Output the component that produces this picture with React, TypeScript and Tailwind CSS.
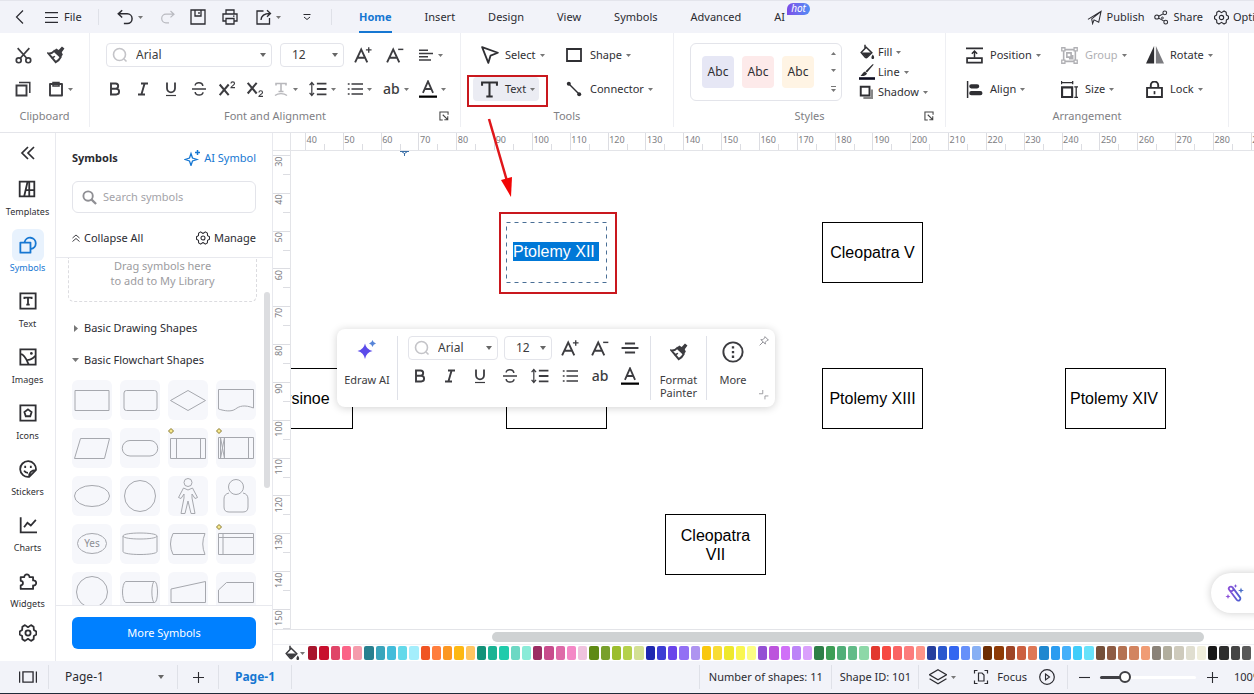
import type { ReactNode } from "react";

type IconProps = { children: ReactNode; className?: string };

// 16x16 line icon, inherits the text colour
function Icon({ children, className = "size-4" }: IconProps) {
  return (
    <svg
      viewBox="0 0 16 16"
      className={`shrink-0 ${className}`}
      fill="none"
      stroke="currentColor"
      strokeWidth="1.6"
      aria-hidden="true"
    >
      {children}
    </svg>
  );
}

function Caret({ className = "text-[#777]" }: { className?: string }) {
  return (
    <svg viewBox="0 0 5 3" className={`w-[5px] h-[3px] shrink-0 ${className}`}>
      <path d="M0 0h5L2.5 3z" fill="currentColor" />
    </svg>
  );
}

const Chevron = () => (
  <svg viewBox="0 0 6 4" className="w-[6px] h-1 shrink-0 text-[#666]">
    <path d="M0 0h6L3 4z" fill="currentColor" />
  </svg>
);

const Divider = ({ className = "h-5" }: { className?: string }) => (
  <div className={`w-px shrink-0 bg-[#dfe1e8] ${className}`} />
);

/* ---------- icons ---------- */

const BoldIcon = () => (
  <Icon>
    <path d="M4 2.5h4.6a2.6 2.6 0 0 1 0 5.2H4zM4 7.7h5.2a2.9 2.9 0 0 1 0 5.8H4z" strokeWidth="1.9" />
  </Icon>
);
const ItalicIcon = () => (
  <Icon>
    <path d="M6 2.5h7M3 13.5h7M9.6 2.5l-3.2 11" strokeWidth="1.9" />
  </Icon>
);
const UnderlineIcon = () => (
  <Icon>
    <path d="M4 1.5v5.8a4 4 0 0 0 8 0V1.5" strokeWidth="1.8" />
    <path d="M3 14.5h10" strokeWidth="1.2" />
  </Icon>
);
const StrikeIcon = () => (
  <Icon>
    <path d="M11.8 5c-.2-4.2-7.6-4.2-7.6-.6M4.2 11c.2 4.2 7.8 4 7.8.3M1 8h14" strokeWidth="1.5" />
  </Icon>
);
const SuperIcon = () => (
  <Icon className="size-[18px]">
    <path d="M1.5 4l8 9.5M9.5 4l-8 9.5" strokeWidth="1.8" />
    <path d="M11.5 3.2c0-2 3.2-2 3.2 0 0 1.3-3.2 2.6-3.2 3.6h3.6" strokeWidth="1" />
  </Icon>
);
const SubIcon = () => (
  <Icon className="size-[18px]">
    <path d="M1.5 2.5l8 9.5M9.5 2.5l-8 9.5" strokeWidth="1.8" />
    <path d="M11.5 11c0-2 3.2-2 3.2 0 0 1.3-3.2 2.6-3.2 3.6h3.6" strokeWidth="1" />
  </Icon>
);
const TextEffectIcon = () => (
  <Icon>
    <path d="M3 4.5v-2h10v2M8 2.5v8M5.5 10.5h5" />
    <path d="M2 14.5c3-2.5 9-2.5 12 0" strokeWidth="1.3" />
  </Icon>
);
const SpacingIcon = () => (
  <Icon className="size-[18px]">
    <path d="M2.5 2v12M.5 4.5l2-2.3 2 2.3M.5 11.5l2 2.3 2-2.3" strokeWidth="1.1" />
    <path d="M7 3.2h8.5M7 8h8.5M7 12.8h8.5" />
  </Icon>
);
const ListIcon = () => (
  <Icon>
    <path d="M4.5 3H16M4.5 8H16M4.5 13H16M.8 3h1.8M.8 8h1.8M.8 13h1.8" />
  </Icon>
);
const AlignLeftIcon = () => (
  <Icon>
    <path d="M1 3.2h9M1 6.5h14M1 9.8h9M1 13h12" />
  </Icon>
);
const AlignMiddleIcon = () => (
  <Icon className="size-[18px]">
    <path d="M3.5 4h9M.5 8h15M3.5 12h9" />
  </Icon>
);
const GrowIcon = () => (
  <Icon className="size-[18px]">
    <path d="M1 14.5L6.4 3l5.4 11.5M3 10.5h6.8" strokeWidth="1.7" />
    <path d="M10.6 3.5h5M13.1 1v5" strokeWidth="1.2" />
  </Icon>
);
const ShrinkIcon = () => (
  <Icon className="size-[18px]">
    <path d="M1 14.5L6.4 3l5.4 11.5M3 10.5h6.8" strokeWidth="1.7" />
    <path d="M10.8 3h4.6" strokeWidth="1.3" />
  </Icon>
);
const FontColorIcon = () => (
  <Icon className="size-[18px]">
    <path d="M3.5 11.5L8 1.2l4.5 10.3M5 8h6" />
    <path d="M0 14.8h16" stroke="#000" strokeWidth="2" />
  </Icon>
);
const CaseIcon = () => <span className="text-sm leading-4 font-medium">ab</span>;
const PainterIcon = ({ className = "size-[18px]" }: { className?: string }) => (
  <Icon className={className}>
    <path d="M1.2 6.6c2.2.2 4-.6 5.2-2.2l5.8 5.4c-.9 1.9-2.4 3.5-4.4 4.6z" strokeWidth="1.7" />
    <path d="M4 10.4c1.2 0 2.2-.4 3-1.2" strokeWidth="1.2" />
    <path d="M6.2 4.2l2-2 2.2 1.4L13.3.5l2.2 1.7-2.4 3.3 1 2.2-1.8 2z" fill="currentColor" stroke="none" />
  </Icon>
);
const GearIcon = ({ className = "size-4", strokeWidth = 1.6 }: { className?: string; strokeWidth?: number }) => (
  <Icon className={className}>
    <g strokeWidth={strokeWidth} strokeLinejoin="round">
      <path d="M8 2.8L10.7 1l2.3 1.4.2 2.9 2.2 1.3v2.8l-2.2 1.3-.2 2.9-2.3 1.4L8 13.2 5.3 15 3 13.6l-.2-2.9L.6 9.4V6.6l2.2-1.3.2-2.9L5.3 1z" />
      <circle cx="8" cy="8" r="2.3" />
    </g>
  </Icon>
);
const BucketIcon = () => (
  <Icon>
    <path d="M6 .8v4M2.2 8.5l5-5.2 5.6 5.4-4.6 4.6a1.5 1.5 0 0 1-2 0z" strokeWidth="1.5" />
    <path
      d="M2.5 8.5h10l-5.2 5.3zM13.8 10.5c2 2.6 1.6 4.5 0 4.5s-2-1.9 0-4.5z"
      fill="currentColor"
      stroke="none"
    />
  </Icon>
);
const LauncherIcon = () => (
  <Icon className="size-[10px]">
    <path d="M14.5 6V1.5h-13v13H6M6 6l7.5 7.5M14 8.5V14H8.5" strokeWidth="1.7" />
  </Icon>
);
const SearchRing = () => (
  <Icon className="size-4 text-[#c4c4c8]">
    <circle cx="7.5" cy="7.5" r="6" />
    <path d="M12 12l2.5 2.5" />
  </Icon>
);

/* ---------- small building blocks ---------- */

type ToolProps = {
  icon: ReactNode;
  name: string;
  caret?: boolean;
  className?: string;
};

function Tool({ icon, name, caret = false, className = "w-7 justify-center" }: ToolProps) {
  return (
    <button aria-label={name} className={`flex items-center h-6 shrink-0 ${className}`}>
      {icon}
      {caret && <Caret className="ml-1 text-[#777]" />}
    </button>
  );
}

function LabelTool({ icon, label, className = "" }: { icon: ReactNode; label: string; className?: string }) {
  return (
    <button className={`flex items-center h-6 whitespace-nowrap ${className}`}>
      <span className="w-6 flex shrink-0">{icon}</span>
      {label}
      <Caret className="ml-1 text-[#777]" />
    </button>
  );
}

type PickBoxProps = { value: string; label: string; search?: boolean; className: string };

function PickBox({ value, label, search = false, className }: PickBoxProps) {
  return (
    <label
      className={`flex items-center h-6 rounded border border-[#e3e4ea] bg-white px-[5px] text-xs shrink-0 ${className}`}
    >
      {search && <SearchRing />}
      <select
        aria-label={label}
        defaultValue={value}
        className={`appearance-none flex-1 min-w-0 bg-transparent outline-none ${search ? "pl-2" : "pl-[6px]"}`}
      >
        <option>{value}</option>
      </select>
      <Chevron />
    </label>
  );
}

type GroupProps = { title: string; launcher?: boolean; className: string; children: ReactNode };

function Group({ title, launcher = false, className, children }: GroupProps) {
  return (
    <section className={`flex flex-col pt-[5px] shrink-0 border-r border-[#eeeff3] ${className}`}>
      <div className="h-[68px]">{children}</div>
      <div className="grid grid-cols-[1fr_auto_1fr] items-center h-5 px-[11px] text-[#808084]">
        <h2 className="col-start-2">{title}</h2>
        {launcher && (
          <button aria-label={`${title} options`} className="justify-self-end text-[#444]">
            <LauncherIcon />
          </button>
        )}
      </div>
    </section>
  );
}

/* ---------- title bar ---------- */

const tabs = ["Home", "Insert", "Design", "View", "Symbols", "Advanced"];

function TitleBar() {
  return (
    <header className="flex items-center h-[33px] shrink-0 bg-[#f2f3f9] border-t border-[#e4e5ec] whitespace-nowrap text-[#2b2b31]">
      <Tool
        name="Back"
        className="w-10 justify-center"
        icon={
          <Icon>
            <path d="M11 1.5L4.5 8l6.5 6.5" strokeWidth="1.2" />
          </Icon>
        }
      />
      <button className="flex items-center gap-[6px] pl-[5px] w-[58px]">
        <Icon className="size-[13px]">
          <path d="M0 2h16M0 8h16M0 14h16" strokeWidth="1.4" />
        </Icon>
        File
      </button>
      <Divider className="h-4" />
      <Tool
        name="Undo"
        caret
        className="ml-[17px] w-[38px]"
        icon={
          <Icon className="size-[18px]">
            <path d="M5.5 2L2 5.2l3.5 3.2M2 5.2h8a4.3 4.3 0 0 1 0 8.6H7" strokeWidth="1.3" />
          </Icon>
        }
      />
      <Tool
        name="Redo"
        className="w-7 justify-center text-[#b9bac0]"
        icon={
          <Icon>
            <path d="M10.5 2L14 5.2l-3.5 3.2M14 5.2H6a4.3 4.3 0 0 0 0 8.6h3" strokeWidth="1.2" />
          </Icon>
        }
      />
      <Tool
        name="Save"
        className="w-8 justify-center"
        icon={
          <Icon>
            <path d="M1 1h14v14H1zM5 1v6h6V1M9 3v2" strokeWidth="1.3" />
          </Icon>
        }
      />
      <Tool
        name="Print"
        className="w-8 justify-center"
        icon={
          <Icon>
            <path d="M4 5V1h8v4M4 12H1V5h14v7h-3M4 9.5h8V15H4zM11 7.2h1.5" strokeWidth="1.3" />
          </Icon>
        }
      />
      <Tool
        name="Export"
        caret
        className="w-9 ml-[10px]"
        icon={
          <Icon>
            <path d="M7.5 2H1v13h12.5V9" strokeWidth="1.3" />
            <path d="M5 11c.3-4.2 3-6.5 9-6.5M11 1.3l3.5 3.2L11 7.8" strokeWidth="1.3" />
          </Icon>
        }
      />
      <Tool
        name="Customize"
        className="w-6 ml-[3px] justify-center"
        icon={
          <Icon className="size-2">
            <path d="M1 3h14M2 8l6 5 6-5" strokeWidth="2" />
          </Icon>
        }
      />
      <Divider className="h-4 ml-3" />

      <nav className="flex items-stretch gap-[33px] ml-[27px] h-full">
        {tabs.map((tab) => (
          <button
            key={tab}
            className={
              tab === "Home"
                ? "font-bold text-[#1677d2] border-b-2 border-[#1677d2] pt-[3px]"
                : "border-b-2 border-transparent pt-[3px]"
            }
          >
            {tab}
          </button>
        ))}
        <button className="relative border-b-2 border-transparent pt-[3px]">
          AI
          <span className="absolute left-[13px] top-[2px] h-3 px-1 rounded-full rounded-bl-none bg-linear-to-r from-[#7b4be8] to-[#4d8df5] text-white text-[10px] leading-[11px] italic">
            hot
          </span>
        </button>
      </nav>

      <div className="flex-1" />
      <button className="flex items-center gap-1">
        <Icon className="size-[15px]">
          <path d="M1 10L15 1.5 12.5 13l-5-2.5L6 14.5l-1-5L14.5 2" strokeWidth="1.1" />
        </Icon>
        Publish
      </button>
      <button className="flex items-center gap-1 ml-[10px]">
        <Icon className="size-[15px]">
          <circle cx="3" cy="7.5" r="2.2" strokeWidth="1.1" />
          <circle cx="11.5" cy="3" r="2" strokeWidth="1.1" />
          <circle cx="12.5" cy="13" r="2" strokeWidth="1.1" />
          <circle cx="9" cy="8.5" r="1" strokeWidth="1" />
          <path d="M5 6.6l4.7-2.5M5 8.7l5.7 3.2" strokeWidth="1.1" />
        </Icon>
        Share
      </button>
      <button className="flex items-center gap-1 ml-[11px] w-10 overflow-hidden">
        <GearIcon className="size-[15px]" strokeWidth={1.2} />
        Options
      </button>
    </header>
  );
}

/* ---------- ribbon ---------- */

const styleChips = ["bg-[#e6e7f5]", "bg-[#fdeaea]", "bg-[#fff4e4]"];

function Ribbon() {
  return (
    <div className="flex h-[100px] pb-[5px] shrink-0 bg-white border-b border-[#e4e5ea] overflow-hidden text-[#2f2f33]">
      <Group title="Clipboard" className="w-[90px]">
        <div className="grid grid-cols-2 h-full items-center pl-[15px] pr-[11px] text-[#3c3c40]">
          <Tool
            name="Cut"
            className="w-6"
            icon={
              <Icon className="size-[17px]">
                <path d="M2.5 1l8.8 9.8M13.5 1l-8.8 9.8" />
                <circle cx="3.5" cy="12.5" r="2.3" />
                <circle cx="12.5" cy="12.5" r="2.3" />
              </Icon>
            }
          />
          <Tool name="Format painter" className="w-6" icon={<PainterIcon />} />
          <Tool
            name="Copy"
            className="w-6"
            icon={
              <Icon>
                <path d="M1.5 4.5h10v10h-10z" strokeWidth="1.9" />
                <path d="M4 1.5h10.8V12" strokeWidth="1.5" />
              </Icon>
            }
          />
          <Tool
            name="Paste"
            caret
            icon={
              <Icon>
                <path d="M2 3h12v11.5H2z" strokeWidth="1.9" strokeLinejoin="round" />
                <path d="M5 1.5h6V5H5z" strokeWidth="1.5" />
              </Icon>
            }
          />
        </div>
      </Group>

      <Group title="Font and Alignment" launcher className="w-[371px]">
        <div className="flex items-center h-[34px] pl-4 text-[#3c3c40]">
          <PickBox label="Font" value="Arial" search className="w-[166px]" />
          <PickBox label="Font size" value="12" className="w-16 ml-2" />
          <Tool name="Increase font size" icon={<GrowIcon />} className="w-7 ml-[5px] justify-center" />
          <Tool name="Decrease font size" icon={<ShrinkIcon />} className="w-7 ml-1 justify-center" />
          <Tool name="Text align" icon={<AlignLeftIcon />} caret className="w-9 ml-[9px]" />
        </div>
        <div className="flex items-center h-[34px] pl-[11px] text-[#3c3c40]">
          <Tool name="Bold" icon={<BoldIcon />} />
          <Tool name="Italic" icon={<ItalicIcon />} />
          <Tool name="Underline" icon={<UnderlineIcon />} />
          <Tool name="Strikethrough" icon={<StrikeIcon />} />
          <Tool name="Superscript" icon={<SuperIcon />} />
          <Tool name="Subscript" icon={<SubIcon />} />
          <Tool name="Text effect" icon={<TextEffectIcon />} caret className="w-9 ml-1 text-[#b8b8bc]" />
          <Tool name="Line spacing" icon={<SpacingIcon />} caret className="w-[38px]" />
          <Tool name="List" icon={<ListIcon />} caret className="w-9" />
          <Tool name="Text case" icon={<CaseIcon />} caret className="w-9" />
          <Tool name="Font color" icon={<FontColorIcon />} caret className="w-9" />
        </div>
      </Group>

      <Group title="Tools" className="w-[213px]">
        <div className="grid grid-cols-[93px_1fr] h-full items-center justify-items-start pl-3">
          <LabelTool
            label="Select"
            className="pl-2"
            icon={
              <Icon className="size-[18px]">
                <path d="M1 1l14 5-6.5 2.5-2 6.5z" strokeLinejoin="round" />
              </Icon>
            }
          />
          <LabelTool
            label="Shape"
            icon={
              <Icon>
                <path d="M1 2h14v12H1z" strokeWidth="1.8" />
              </Icon>
            }
          />
          <LabelTool
            label="Text"
            className="pl-2 pr-1 rounded bg-[#ebecf3]"
            icon={
              <Icon className="size-[17px]">
                <path d="M1 4.5v-3h14v3M8 1.5v13M5 14.5h6" strokeWidth="1.9" />
              </Icon>
            }
          />
          <LabelTool
            label="Connector"
            icon={
              <Icon>
                <path d="M3 3l10 10" strokeWidth="1.4" />
                <circle cx="2.8" cy="2.8" r="2" fill="currentColor" stroke="none" />
                <circle cx="13.2" cy="13.2" r="2" fill="currentColor" stroke="none" />
              </Icon>
            }
          />
        </div>
      </Group>

      <Group title="Styles" launcher className="w-[272px]">
        <div className="flex items-center h-full pl-4">
          <div className="flex items-center gap-2 w-[152px] h-[58px] pl-[11px] pr-[5px] rounded-md border border-[#e3e4ea]">
            {styleChips.map((chip) => (
              <button key={chip} className={`size-8 shrink-0 rounded text-xs ${chip}`}>
                Abc
              </button>
            ))}
            <div className="flex flex-col items-center justify-between h-10 ml-auto">
              <button aria-label="Previous styles" className="flex rotate-180">
                <Caret />
              </button>
              <button aria-label="Next styles" className="flex">
                <Caret />
              </button>
              <button aria-label="All styles" className="flex flex-col items-center border-t border-[#777] pt-[2px]">
                <Caret />
              </button>
            </div>
          </div>
          <div className="flex flex-col ml-[17px]">
            {[
              { label: "Fill", icon: <BucketIcon /> },
              {
                label: "Line",
                icon: (
                  <Icon>
                    <path
                      d="M14.8.5L8 8.5 6.5 7.2l7-7zM6 7.5l2 2c-1 2.5-4 2.8-6.5 2.5C3 10.5 4 8 6 7.5z"
                      fill="currentColor"
                      stroke="none"
                    />
                    <path d="M0 14.5h16" stroke="#0d0d20" strokeWidth="2.6" />
                  </Icon>
                ),
              },
              {
                label: "Shadow",
                icon: (
                  <Icon className="size-[14px]">
                    <path d="M5 15h10V5" stroke="#888" strokeWidth="3" />
                    <path d="M2 2h10v10H2z" strokeWidth="2.2" />
                  </Icon>
                ),
              },
            ].map((item) => (
              <button key={item.label} className="flex items-center h-5">
                <span className="w-[19px] flex">{item.icon}</span>
                {item.label}
                <Caret className="ml-1 text-[#777]" />
              </button>
            ))}
          </div>
        </div>
      </Group>

      <Group title="Arrangement" className="w-[283px]">
        <div className="grid grid-cols-[95px_85px_1fr] h-full items-center justify-items-start pl-5">
          <LabelTool
            label="Position"
            icon={
              <Icon className="size-[17px]">
                <path d="M0 1.2h16M1 10.5h14v4.2H1z" />
                <path d="M8 10V4M5.5 6.3L8 3.8l2.5 2.5" strokeWidth="1.4" />
              </Icon>
            }
          />
          <LabelTool
            label="Group"
            className="text-[#b0b0b4]"
            icon={
              <Icon className="size-[17px]">
                <path d="M2.5 2.5h11v11h-11z" strokeWidth="1.5" />
                <path
                  d="M.7.7h3v3h-3zM12.3.7h3v3h-3zM.7 12.3h3v3h-3zM12.3 12.3h3v3h-3z"
                  strokeWidth="1.2"
                  fill="#fff"
                />
                <path d="M5.5 5.5h4v4h-4zM11 7.5V11H7.5" strokeWidth="1.5" />
              </Icon>
            }
          />
          <LabelTool
            label="Rotate"
            icon={
              <Icon className="size-[18px]">
                <path d="M7.2 0v15.5H0z" fill="currentColor" stroke="none" />
                <path d="M8.8 0v15.5H16z" fill="#7c7c80" stroke="none" />
              </Icon>
            }
          />
          <LabelTool
            label="Align"
            icon={
              <Icon className="size-[17px]">
                <path d="M1.5 0v16" strokeWidth="1.4" />
                <path d="M5 5h5.500M5 11.500h8.500" strokeWidth="4" strokeLinecap="round" />
              </Icon>
            }
          />
          <LabelTool
            label="Size"
            icon={
              <Icon className="size-[17px]">
                <path d="M1 6h9.5v9H1z" strokeWidth="2" />
                <path d="M.5 0v3M11 0v3M0 1.5h11.5M12.5 5.5H16M12.5 15.5H16M14.3 5.5v10" strokeWidth="1.2" />
              </Icon>
            }
          />
          <LabelTool
            label="Lock"
            icon={
              <Icon className="size-[17px]">
                <path d="M1 6.5h14V15H1zM4.5 6.5V4a3.5 3.5 0 0 1 7 0v2.5" strokeWidth="1.8" />
                <path d="M8 9.5v3" />
              </Icon>
            }
          />
        </div>
      </Group>
    </div>
  );
}

/* ---------- left rail ---------- */

const railItems = [
  {
    label: "Templates",
    icon: <path d="M1.5 1.5h13v13h-13zM8.5 1.5l-3 13M10 1.5v13M6.5 9h8" />,
  },
  {
    label: "Symbols",
    icon: (
      <>
        <path d="M1.2 5.8h9v9h-9z" strokeLinejoin="round" />
        <path d="M5 5.5a5 5 0 1 1 5.5 6" />
      </>
    ),
  },
  {
    label: "Text",
    icon: (
      <>
        <path d="M1.2 1.2h13.6v13.6H1.2z" />
        <path d="M4.8 6.3V5h6.4v1.3M8 5v6M6.5 11.2h3" />
      </>
    ),
  },
  {
    label: "Images",
    icon: (
      <>
        <path d="M1.2 1.2h13.6v13.6H1.2z" />
        <path d="M1.5 5.5C5 5.5 7 11 8.5 14.5M7.5 10.5c2 .5 4-.5 7-3.5" />
        <circle cx="11" cy="4.8" r="1.2" fill="currentColor" stroke="none" />
      </>
    ),
  },
  {
    label: "Icons",
    icon: (
      <>
        <path d="M1.2 1.2h13.6v13.6H1.2z" />
        <path d="M8 4.8l3.2 2.4-1.2 3.7H6L4.8 7.2z" />
      </>
    ),
  },
  {
    label: "Stickers",
    icon: (
      <>
        <path d="M9 15A7 7 0 1 1 15 9zM9 15c0-3.5 2-6 6-6" />
        <path d="M5.5 5v2M10.5 5v2M4.5 9.5c.8 1.5 2 2 3.5 2" />
      </>
    ),
  },
  {
    label: "Charts",
    icon: <path d="M1.5 1v13.5H16M4.5 10l3-4 3 2.5L15 3.5" />,
  },
  {
    label: "Widgets",
    icon: (
      <path
        d="M1.5 4.5h3.2a2.3 2.3 0 1 1 4.6 0h3.2v3a2.3 2.3 0 1 1 0 4.5v3h-11v-3.2a2 2 0 1 0 0-4z"
        strokeLinejoin="round"
      />
    ),
  },
];

function Rail() {
  return (
    <aside className="flex flex-col items-center w-14 shrink-0 bg-white border-r border-[#e8e9ee] text-[#2f2f33]">
      <button aria-label="Collapse panel" className="flex items-center h-10">
        <Icon>
          <path d="M8 2L2 8l6 6M14 2L8 8l6 6" strokeWidth="1.7" />
        </Icon>
      </button>
      {railItems.map((item) => (
        <button
          key={item.label}
          className={`flex flex-col items-center h-14 shrink-0 ${item.label === "Symbols" ? "text-[#1677d2]" : ""}`}
        >
          <span
            className={`flex items-center justify-center size-8 rounded-md ${
              item.label === "Symbols" ? "bg-[#e8f2fd]" : ""
            }`}
          >
            <Icon className="size-[18px]">{item.icon}</Icon>
          </span>
          <span className="text-[9px] leading-[14px]">{item.label}</span>
        </button>
      ))}
      <button aria-label="Settings" className="flex items-center h-6">
        <GearIcon className="size-[18px]" />
      </button>
    </aside>
  );
}

/* ---------- symbols panel ---------- */

const flowShapes = [
  { name: "Process", d: "M3 10.5h34v20H3z" },
  {
    name: "Alternate process",
    d: "M6.5 10.5h28q2.5 0 2.5 2.5v15q0 2.5-2.5 2.5h-28Q4 30.5 4 28V13q0-2.5 2.5-2.5z",
  },
  { name: "Decision", d: "M2.5 20.5l17.5-10 17.5 10-17.5 10z" },
  { name: "Document", d: "M2.5 9.5h35V28c-9-3.5-14-2-18 1s-11 2-17 0z" },
  { name: "Data", d: "M8.5 10.5h29l-5 20h-30z" },
  { name: "Terminator", d: "M10 12.5h20A7.5 7.5 0 0 1 30 28H10a7.5 7.5 0 0 1 0-15.5z" },
  { name: "Predefined process", d: "M2.5 10.5h35v20h-35zM8.5 10.5v20M32.5 10.5v20", handle: true },
  {
    name: "Striped process",
    d: "M2.5 9.5h35v21h-35zM4.5 9.5v21M8.5 9.5v21M32.5 9.5v21M4.5 9.5l4 21M8.5 9.5l-4 21",
    handle: true,
  },
  { name: "Ellipse", d: "M2.5 20a17.5 10.5 0 1 0 35 0 17.5 10.5 0 1 0-35 0" },
  { name: "Circle", d: "M4.5 20a15.5 15.5 0 1 0 31 0 15.5 15.5 0 1 0-31 0" },
  {
    name: "Person",
    d: "M16 6.5a4 4 0 1 0 8 0 4 4 0 1 0-8 0M15.5 12l4.5 2 4.5-2 5 9.5-2.5 1-3-4.5v4l3 15.5h-4L20 25l-3 12.5h-4L16 22v-4l-3 4.5-2.5-1z",
  },
  {
    name: "User",
    d: "M12.5 11a7.5 7.5 0 1 0 15 0 7.5 7.5 0 1 0-15 0M13 17q-5 1-5 6v8q0 5 5 5h14q5 0 5-5v-8q0-5-5-6",
  },
  { name: "Yes", d: "M5.5 19.5a14.5 10 0 1 0 29 0 14.5 10 0 1 0-29 0", text: "Yes" },
  { name: "Database", d: "M3 12v15.5c0 4 34 4 34 0V12c0-4-34-4-34 0s34 4 34 0" },
  { name: "Stored data", d: "M5 9.5h32q-4.500 10.500 0 21H5q-5-10.500 0-21z" },
  { name: "Internal storage", d: "M2.5 9.5h35v21h-35zM7 9.5v21M2.5 13.5h35", handle: true },
  { name: "Reference", d: "M4.5 20a15.5 15.5 0 1 0 31 0 15.5 15.5 0 1 0-31 0" },
  { name: "Direct access", d: "M5.5 9.5h29c4 0 4 21 0 21h-29c-4-3-4-18 0-21zM34.5 9.5c-3.5 0-3.5 21 0 21" },
  { name: "Manual input", d: "M3 17l34.5-7.5v21H3z" },
  { name: "Card", d: "M2.5 18l8-7.5h27v20h-35z" },
];

function SymbolsPanel() {
  return (
    <aside className="flex flex-col w-[217px] shrink-0 bg-white border-r border-[#e8e9ee] text-[#2b2b31]">
      <div className="px-4 pt-3 border-b border-[#e8e9ee] h-[125px] shrink-0">
        <div className="flex items-center justify-between h-[26px]">
          <h2 className="font-bold">Symbols</h2>
          <button className="flex items-center gap-1 text-[#1677d2]">
            <Icon>
              <path d="M7 3.5L8.5 8 13 9.5 8.5 11 7 15.5 5.5 11 1 9.5 5.5 8z" strokeWidth="1.3" />
              <path d="M13.5 0v5M11 2.5h5" strokeWidth="1.5" />
            </Icon>
            AI Symbol
          </button>
        </div>
        <label className="flex items-center gap-[6px] h-8 mt-[10px] px-[9px] rounded-md border border-[#e3e4ea]">
          <Icon className="size-[15px] text-[#8f8f94]">
            <circle cx="6.5" cy="6.5" r="5" strokeWidth="2" />
            <path d="M10 10l5 5" strokeWidth="2.4" />
          </Icon>
          <input
            aria-label="Search symbols"
            placeholder="Search symbols"
            className="w-full min-w-0 outline-none placeholder:text-[#a3a3a8]"
          />
        </label>
        <div className="flex items-center justify-between h-8 mt-[9px]">
          <button className="flex items-center gap-1">
            <Icon className="size-2">
              <path d="M1 8l7-6 7 6M1 15l7-6 7 6" strokeWidth="1.8" />
            </Icon>
            Collapse All
          </button>
          <button className="flex items-center gap-1">
            <GearIcon className="size-[14px]" strokeWidth={1.2} />
            Manage
          </button>
        </div>
      </div>

      <div className="relative flex-1 min-h-0 overflow-hidden">
        <div className="ml-3 mr-[15px] h-11 rounded-b-md border border-t-0 border-dashed border-[#dcdce0] text-center leading-[15px] text-[#9c9ca0]">
          Drag symbols here
          <br />
          to add to My Library
        </div>
        <div className="px-4 pt-[10px]">
          <button className="flex items-center gap-[5px] h-8">
            <svg viewBox="0 0 4 7" className="w-1 h-[7px] ml-[2px] mr-px">
              <path d="M0 0l4 3.5L0 7z" fill="#777" />
            </svg>
            Basic Drawing Shapes
          </button>
          <button className="flex items-center gap-[5px] h-8">
            <svg viewBox="0 0 7 4" className="w-[7px] h-1">
              <path d="M0 0h7L3.5 4z" fill="#777" />
            </svg>
            Basic Flowchart Shapes
          </button>
          <div className="grid grid-cols-4 gap-2 mt-1">
            {flowShapes.map((shape) => (
              <button key={shape.name} aria-label={shape.name} className="h-10 rounded-md bg-[#f6f7fb]">
                <svg viewBox="0 0 40 40" className="size-10 overflow-visible" fill="none" stroke="#a6a8ae">
                  <path d={shape.d} />
                  {shape.text && (
                    <text x="20" y="23" textAnchor="middle" fontSize="10" fill="#8c8e94" stroke="none">
                      {shape.text}
                    </text>
                  )}
                  {shape.handle && <path d="M3 .5L5.5 3 3 5.5.5 3z" fill="#f7e98c" stroke="#8a7a30" />}
                </svg>
              </button>
            ))}
          </div>
        </div>
        <div className="absolute right-[2px] top-[34px] w-[6px] h-[196px] rounded-full bg-[#dcdde0]" />
      </div>

      <div className="h-14 shrink-0 border-t border-[#e8e9ee] px-4 pt-[11px]">
        <button className="w-full h-8 rounded-md bg-[#0080ff] text-white">More Symbols</button>
      </div>
    </aside>
  );
}

/* ---------- rulers ---------- */

// pixels between two labelled marks
const STEP = 37.83;

function TopRuler() {
  const marks = Array.from({ length: 26 }, (_, i) => 40 + i * 10);
  return (
    <svg className="w-full h-[18px] block border-b border-[#e3e4e8]" shapeRendering="crispEdges">
      {marks.map((mark, i) => {
        const x = 14.5 + i * STEP;
        return (
          <g key={mark} stroke="#dcdde2">
            <line x1={x} x2={x} y1="0" y2="18" />
            <line x1={x + STEP / 2} x2={x + STEP / 2} y1="11" y2="18" />
            <text x={x + 1} y="10" fontSize="9" fill="#7d7d82" stroke="none">
              {mark}
            </text>
          </g>
        );
      })}
    </svg>
  );
}

function SideRuler() {
  const marks = Array.from({ length: 13 }, (_, i) => 30 + i * 10);
  return (
    <svg className="w-[18px] h-full block shrink-0 border-r border-[#e3e4e8]" shapeRendering="crispEdges">
      {marks.map((mark, i) => {
        const y = 4.5 + i * STEP;
        return (
          <g key={mark} stroke="#dcdde2">
            <line x1="0" x2="18" y1={y} y2={y} />
            <line x1="10" x2="18" y1={y + STEP / 2} y2={y + STEP / 2} />
            <text
              transform={`translate(9 ${y + 1}) rotate(-90)`}
              textAnchor="end"
              fontSize="9"
              fill="#7d7d82"
              stroke="none"
            >
              {mark}
            </text>
          </g>
        );
      })}
    </svg>
  );
}

/* ---------- canvas ---------- */

const nodes = [
  { text: "Cleopatra V", place: "left-[531px] top-[71px] px-1" },
  { text: "Arsinoe", place: "left-[-39px] top-[217px] px-1" },
  { text: "", place: "left-[215px] top-[217px] px-1" },
  { text: "Ptolemy XIII", place: "left-[531px] top-[217px] px-1" },
  { text: "Ptolemy XIV", place: "left-[774px] top-[217px] pl-px pr-1" },
  { text: "Cleopatra VII", place: "left-[374px] top-[363px] px-1" },
];

const floatingTools = [
  { name: "Bold text", icon: <BoldIcon /> },
  { name: "Italic text", icon: <ItalicIcon /> },
  { name: "Underline text", icon: <UnderlineIcon /> },
  { name: "Strike text", icon: <StrikeIcon /> },
  { name: "Text line spacing", icon: <SpacingIcon /> },
  { name: "Text list", icon: <ListIcon /> },
  { name: "Change case", icon: <CaseIcon /> },
  { name: "Text color", icon: <FontColorIcon /> },
];

function FloatingToolbar() {
  return (
    <div className="absolute left-[46px] top-[178px] flex h-[78px] py-[7px] bg-white rounded-lg shadow-[0_1px_8px_rgba(0,0,0,0.18)] text-[#3c3c40]">
      <button className="flex flex-col items-center w-[60px] pt-1">
        <svg viewBox="0 0 20 20" className="size-5">
          <path d="M8 3.5q1.2 6 7.5 7.5Q9.2 12.500 8 19q-1.200-6.500-7.500-8Q6.800 9.500 8 3.500z" fill="#5b4bea" />
          <path d="M15.5 0q.6 2.8 3.5 3.5-2.9.7-3.5 3.5-.6-2.8-3.5-3.5Q14.9 2.8 15.5 0z" fill="#5684d8" />
        </svg>
        <span className="mt-3 leading-4">Edraw AI</span>
      </button>
      <Divider className="h-full" />
      <div className="w-[252px]">
        <div className="flex items-center h-6 pl-[10px]">
          <PickBox label="Selection font" value="Arial" search className="w-[90px]" />
          <PickBox label="Selection font size" value="12" className="w-12 ml-[6px]" />
          <Tool name="Grow text" icon={<GrowIcon />} className="w-[30px] ml-[3px] justify-center" />
          <Tool name="Shrink text" icon={<ShrinkIcon />} className="w-[30px] justify-center" />
          <Tool name="Align center" icon={<AlignMiddleIcon />} className="w-[30px] justify-center" />
        </div>
        <div className="flex items-center h-8 pl-[7px]">
          {floatingTools.map((tool) => (
            <Tool key={tool.name} name={tool.name} icon={tool.icon} className="w-[30px] justify-center" />
          ))}
        </div>
      </div>
      <Divider className="h-full" />
      <button className="flex flex-col items-center w-[55px] pt-[7px] leading-[13px]">
        <PainterIcon />
        <span className="mt-3">
          Format
          <br />
          Painter
        </span>
      </button>
      <Divider className="h-full" />
      <button className="flex flex-col items-center w-[52px] pt-[5px] leading-[13px]">
        <Icon className="size-[22px]">
          <circle cx="8" cy="8" r="7" strokeWidth="1.4" />
          <path d="M8 3.8v1.7M8 7.2v1.7M8 10.6v1.7" strokeWidth="1.7" />
        </Icon>
        <span className="mt-[10px]">More</span>
      </button>
      <div className="flex flex-col justify-between w-4 text-[#8a8a90]">
        <button aria-label="Pin toolbar">
          <Icon className="size-[10px]">
            <path d="M9.5 1L15 6.5l-2 .5-3 3 .2 3L3 5.8 6 6l3-3zM6.5 9.5L1 15" strokeWidth="1.5" />
          </Icon>
        </button>
        <button aria-label="Resize toolbar">
          <Icon className="size-[10px]">
            <path d="M0 6h6V0M15 9.5H9.5V15" strokeWidth="1.3" />
          </Icon>
        </button>
      </div>
    </div>
  );
}

function Canvas() {
  return (
    <div className="relative flex-1 min-w-0 overflow-hidden bg-white font-['Liberation_Sans',Arial,sans-serif] text-black">
      {nodes.map((node) => (
        <div
          key={node.place}
          className={`absolute flex items-center justify-center text-center w-[101px] h-[61px] border border-black text-base leading-[19px] ${node.place}`}
        >
          {node.text}
        </div>
      ))}

      {/* text box being edited */}
      <svg className="absolute left-[215px] top-[71px] w-[101px] h-[61px]" fill="none">
        <rect x="0.5" y="0.5" width="100" height="60" stroke="#4a6f96" strokeDasharray="4 4" />
      </svg>
      <div className="absolute left-[222px] top-[91px] w-[86px] h-[19px] bg-[#0078d7] text-white text-base leading-[19px]">
        Ptolemy XII
      </div>

      {/* cursor mark on the ruler */}
      <svg viewBox="0 0 9 5" className="absolute left-[109px] top-0 w-[9px] h-[5px]" stroke="#3a6ea5">
        <path d="M0 .5h9M1.5.5l3 2 3-2M4.5 2v3" fill="none" />
      </svg>

      <div className="font-['Noto_Sans',sans-serif]">
        <FloatingToolbar />
      </div>

      <button
        aria-label="AI assistant"
        className="absolute -right-5 bottom-4 flex items-center w-[63px] h-10 pl-[14px] rounded-full bg-white shadow-[0_0_8px_rgba(0,0,0,0.2)]"
      >
        <svg viewBox="0 0 20 20" className="size-5" fill="none">
          <defs>
            <linearGradient id="wand" x1="0" y1="0" x2="1" y2="0">
              <stop offset="0" stopColor="#8a4fd8" />
              <stop offset="1" stopColor="#4a5fd0" />
            </linearGradient>
          </defs>
          <path
            d="M4.2 6.8a2 2 0 0 1 3.3-2.4l7.5 10a2 2 0 0 1-3.3 2.4zM5.8 8.8l3.3-2.4"
            stroke="url(#wand)"
            strokeWidth="1.8"
          />
          <path d="M10.5 1l.6 1.4 1.4.6-1.4.6-.6 1.4-.6-1.4L8.5 3l1.400-.6z" fill="#7a55d8" />
          <path d="M16 4.5l.8 2.2 2.2.8-2.2.8-.8 2.2-.8-2.2-2.2-.8 2.2-.8z" fill="#4a6fc8" />
          <path d="M3 11l.7 1.8 1.8.7-1.8.7L3 16l-.7-1.8-1.8-.7 1.8-.7z" fill="#8a4fd8" />
        </svg>
      </button>
    </div>
  );
}

const palette = [
  "#a8152d", "#c8102e", "#e04468", "#fb6488", "#f59cac",
  "#28808f", "#3aa5bc", "#42bcda", "#64d9ea", "#a4eefc",
  "#f05423", "#ff7e3e", "#fc9722", "#fdb813", "#ffc562",
  "#129278", "#1ab394", "#20cbab", "#6dd8c4", "#8aebd8",
  "#9b2c62", "#c84b8c", "#de6aa8", "#f488c6", "#efc3de",
  "#5e8a14", "#78a02c", "#9cbd2e", "#b5d14c", "#d3e094",
  "#1e27b0", "#3c3cd4", "#6a44ea", "#9270f4", "#ae94f0",
  "#f9c80e", "#f8dc36", "#eee82c", "#f9f650", "#fcfd84",
  "#9450d4", "#bc54dc", "#d070f8", "#bc84f8", "#daa0fc",
  "#2e7f48", "#3d9e56", "#50ae78", "#62bb88", "#8dd8a8",
  "#e2382e", "#f64a42", "#fa6464", "#fc7c7c", "#fd9488",
  "#263f9e", "#2a58ce", "#3366f0", "#6690fa", "#88b0f4",
  "#6e2e04", "#8e3a06", "#9e4426", "#cc6040", "#de7856",
  "#1e88d0", "#2a9cf0", "#44b0fa", "#40cdfa", "#68e2fa",
  "#74503a", "#8e5c44", "#b47252", "#d28460", "#f09c74",
  "#8a8278", "#b2ae9e", "#cecabc", "#e0ded0", "#f0eedc",
  "#181818", "#2e2e2e", "#444444", "#5a5a5a",
];

function Workspace() {
  return (
    <main className="flex flex-col flex-1 min-w-0">
      <div className="flex shrink-0">
        <div className="w-[18px] h-[18px] shrink-0 border-r border-b border-[#e3e4e8]" />
        <div className="flex-1 min-w-0">
          <TopRuler />
        </div>
      </div>
      <div className="flex flex-1 min-h-0">
        <SideRuler />
        <Canvas />
      </div>
      <div className="h-[15px] shrink-0 border-t border-[#e3e4e8] flex items-center">
        <div className="h-[10px] ml-[219px] mr-[50px] flex-1 rounded-full bg-[#cfd2d3]" />
      </div>
      <div className="flex items-center h-[17px] shrink-0 border-t border-[#eeeff3] pl-[11px] pr-[3px] text-[#3c3c40]">
        <button aria-label="Fill color" className="flex items-center w-6 shrink-0">
          <BucketIcon />
          <Caret />
        </button>
        <div className="flex flex-1 gap-[2px] h-[14px]">
          {palette.map((color, i) => (
            <button key={i} aria-label={color} className="flex-1 rounded-[2px]" style={{ background: color }} />
          ))}
        </div>
      </div>
    </main>
  );
}

/* ---------- status bar ---------- */

function StatusBar() {
  return (
    <footer className="flex items-center h-[33px] shrink-0 bg-[#f2f3f9] border-b border-[#1f2a3a] whitespace-nowrap text-[#2b2b31]">
      <Tool
        name="Page view"
        className="w-12 pl-[7px] justify-center"
        icon={
          <Icon className="size-[18px]">
            <path d="M.5 3v10M15.5 3v10M3.5 3.5h9v9h-9z" strokeWidth="1.2" />
          </Icon>
        }
      />
      <Divider className="h-6" />
      <label className="flex items-center w-32 px-[13px] text-xs">
        <select
          aria-label="Page"
          defaultValue="Page-1"
          className="appearance-none flex-1 outline-none bg-transparent pl-[3px]"
        >
          <option>Page-1</option>
        </select>
        <Chevron />
      </label>
      <Divider className="h-6" />
      <Tool
        name="Add page"
        className="w-10 justify-center"
        icon={
          <Icon className="size-[11px]">
            <path d="M0 8h16M8 0v16" />
          </Icon>
        }
      />
      <Divider className="h-6" />
      <button className="w-[72px] text-xs font-bold text-[#1677d2]">Page-1</button>
      <Divider className="h-6" />
      <div className="flex-1" />
      <Divider className="h-6" />
      <span className="w-[131px] text-center">Number of shapes: 11</span>
      <Divider className="h-6" />
      <span className="w-[86px] text-center">Shape ID: 101</span>
      <Divider className="h-6" />
      <Tool
        name="Layers"
        caret
        className="w-[54px] pl-[10px]"
        icon={
          <Icon className="size-[18px]">
            <path d="M8 1.5L15.5 6 8 10.5.5 6zM.5 9.5L8 14l7.5-4.5" strokeWidth="1.1" />
          </Icon>
        }
      />
      <button className="flex items-center gap-2">
        <Icon>
          <path
            d="M4.5 1.5h-3v3M11.5 1.5h3v3M4.5 14.5h-3v-3M11.5 14.5h3v-3M5.5 4H9l2 2v6H5.5z"
            strokeWidth="1.2"
          />
        </Icon>
        Focus
      </button>
      <Tool
        name="Present"
        className="w-10 justify-center"
        icon={
          <Icon>
            <circle cx="8" cy="8" r="7.3" strokeWidth="1.2" />
            <path d="M6.5 5l4 3-4 3z" strokeWidth="1.1" />
          </Icon>
        }
      />
      <Divider className="h-6" />
      <Tool
        name="Zoom out"
        className="w-8 justify-center"
        icon={
          <Icon className="size-[11px]">
            <path d="M0 8h16" />
          </Icon>
        }
      />
      <input
        type="range"
        aria-label="Zoom"
        defaultValue={23}
        className="appearance-none w-24 h-[3px] rounded-full bg-linear-to-r from-[#3f3f44] from-25% to-white to-25% [&::-webkit-slider-thumb]:appearance-none [&::-webkit-slider-thumb]:size-3 [&::-webkit-slider-thumb]:rounded-full [&::-webkit-slider-thumb]:border-2 [&::-webkit-slider-thumb]:border-[#3f3f44] [&::-webkit-slider-thumb]:bg-white"
      />
      <Tool
        name="Zoom in"
        className="w-8 justify-center"
        icon={
          <Icon className="size-[11px]">
            <path d="M0 8h16M8 0v16" />
          </Icon>
        }
      />
      <span className="w-[26px] pl-[6px] overflow-hidden">100%</span>
    </footer>
  );
}

/* Red call-outs that point from the Text tool to the new text box */
function Callouts() {
  return (
    <div className="pointer-events-none">
      <div className="absolute left-[467px] top-[75px] w-[81px] h-8 border-2 border-[#c9181e]" />
      <div className="absolute left-[499px] top-[212px] w-[118px] h-[82px] border-2 border-[#c9181e]" />
      <svg className="absolute left-[484px] top-[114px] w-8 h-[86px]">
        <path d="M5 5l18 62" stroke="#e0161a" strokeWidth="2.5" />
        <path d="M17 66l11-3-1 20z" fill="#f20505" />
      </svg>
    </div>
  );
}

function App() {
  return (
    <div className="relative flex flex-col h-screen overflow-hidden bg-white font-['Noto_Sans',sans-serif] text-[11px]">
      <TitleBar />
      <Ribbon />
      <div className="flex flex-1 min-h-0">
        <Rail />
        <SymbolsPanel />
        <Workspace />
      </div>
      <StatusBar />
      <Callouts />
    </div>
  );
}

export default App;
